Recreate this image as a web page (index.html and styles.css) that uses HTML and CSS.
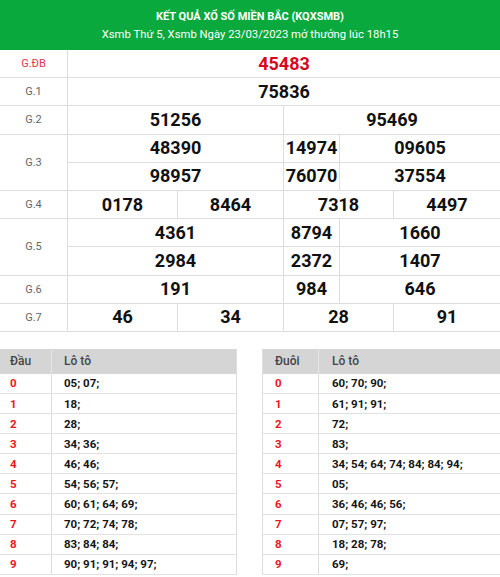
FILE: index.html
```html
<!DOCTYPE html>
<html lang="vi">
<head>
<meta charset="utf-8">
<link rel="stylesheet" href="styles.css">
</head>
<body>
<div class="header">
  <div class="title">KẾT QUẢ XỔ SỐ MIỀN BẮC (KQXSMB)</div>
  <div class="subtitle">Xsmb Thứ 5, Xsmb Ngày 23/03/2023 mở thưởng lúc 18h15</div>
</div>

<div class="results">
  <div class="prize">
    <div class="label special">G.ĐB</div>
    <div class="vals c1"><div class="num special">45483</div></div>
  </div>
  <div class="prize">
    <div class="label">G.1</div>
    <div class="vals c1"><div class="num">75836</div></div>
  </div>
  <div class="prize">
    <div class="label">G.2</div>
    <div class="vals c2"><div class="num">51256</div><div class="num">95469</div></div>
  </div>
  <div class="prize double">
    <div class="label">G.3</div>
    <div class="vals c3">
      <div class="num">48390</div><div class="num">14974</div><div class="num">09605</div>
      <div class="num">98957</div><div class="num">76070</div><div class="num">37554</div>
    </div>
  </div>
  <div class="prize">
    <div class="label">G.4</div>
    <div class="vals c4"><div class="num">0178</div><div class="num">8464</div><div class="num">7318</div><div class="num">4497</div></div>
  </div>
  <div class="prize double">
    <div class="label">G.5</div>
    <div class="vals c3">
      <div class="num">4361</div><div class="num">8794</div><div class="num">1660</div>
      <div class="num">2984</div><div class="num">2372</div><div class="num">1407</div>
    </div>
  </div>
  <div class="prize">
    <div class="label">G.6</div>
    <div class="vals c3"><div class="num">191</div><div class="num">984</div><div class="num">646</div></div>
  </div>
  <div class="prize">
    <div class="label">G.7</div>
    <div class="vals c4"><div class="num">46</div><div class="num">34</div><div class="num">28</div><div class="num">91</div></div>
  </div>
</div>

<div class="loto-wrap">
  <div class="loto left">
    <div class="lrow head"><div class="k">Đầu</div><div class="v">Lô tô</div></div>
    <div class="lrow"><div class="k">0</div><div class="v">05; 07;</div></div>
    <div class="lrow"><div class="k">1</div><div class="v">18;</div></div>
    <div class="lrow"><div class="k">2</div><div class="v">28;</div></div>
    <div class="lrow"><div class="k">3</div><div class="v">34; 36;</div></div>
    <div class="lrow"><div class="k">4</div><div class="v">46; 46;</div></div>
    <div class="lrow"><div class="k">5</div><div class="v">54; 56; 57;</div></div>
    <div class="lrow"><div class="k">6</div><div class="v">60; 61; 64; 69;</div></div>
    <div class="lrow"><div class="k">7</div><div class="v">70; 72; 74; 78;</div></div>
    <div class="lrow"><div class="k">8</div><div class="v">83; 84; 84;</div></div>
    <div class="lrow"><div class="k">9</div><div class="v">90; 91; 91; 94; 97;</div></div>
  </div>
  <div class="loto right">
    <div class="lrow head"><div class="k">Đuôi</div><div class="v">Lô tô</div></div>
    <div class="lrow"><div class="k">0</div><div class="v">60; 70; 90;</div></div>
    <div class="lrow"><div class="k">1</div><div class="v">61; 91; 91;</div></div>
    <div class="lrow"><div class="k">2</div><div class="v">72;</div></div>
    <div class="lrow"><div class="k">3</div><div class="v">83;</div></div>
    <div class="lrow"><div class="k">4</div><div class="v">34; 54; 64; 74; 84; 84; 94;</div></div>
    <div class="lrow"><div class="k">5</div><div class="v">05;</div></div>
    <div class="lrow"><div class="k">6</div><div class="v">36; 46; 46; 56;</div></div>
    <div class="lrow"><div class="k">7</div><div class="v">07; 57; 97;</div></div>
    <div class="lrow"><div class="k">8</div><div class="v">18; 28; 78;</div></div>
    <div class="lrow"><div class="k">9</div><div class="v">69;</div></div>
  </div>
</div>
</body>
</html>
```

FILE: styles.css
```css
* { box-sizing: border-box; }
html, body { margin: 0; padding: 0; background: #fff; }
body { font-family: Roboto, "Noto Sans", Arial, sans-serif; color: #111; width: 500px; overflow: hidden; }

.header {
  background: #0aa93d;
  height: 50px;
  color: #fff;
  text-align: center;
  display: flex;
  flex-direction: column;
  justify-content: center;
  gap: 5px;
  padding-top: 1px;
}
.title { font-size: 11px; font-weight: 700; line-height: 13px; }
.subtitle { font-size: 11.3px; line-height: 14px; }

.results { display: flex; flex-direction: column; }
.prize { display: flex; height: 28.2px; }
.prize.double { height: 56.4px; }
.label {
  width: 68px;
  flex: none;
  border-right: 1px solid #ddd;
  border-bottom: 1px solid #ddd;
  font-size: 11px;
  color: #666;
  display: flex;
  align-items: center;
  justify-content: center;
}
.label.special { color: #e8344a; }
.vals { flex: 1; display: grid; }
.vals.c1 { grid-template-columns: 1fr; }
.vals.c2 { grid-template-columns: 215px 1fr; }
.vals.c3 { grid-template-columns: 215px 56px 1fr; }
.vals.c4 { grid-template-columns: 109px 106px 110px 1fr; }
.num {
  border-bottom: 1px solid #ddd;
  border-left: 1px solid #ddd;
  font-size: 18px;
  font-weight: 700;
  color: #111;
  display: flex;
  align-items: center;
  justify-content: center;
  line-height: 1;
}
.vals .num:first-child,
.vals.c3 .num:nth-child(4) { border-left: none; }
.num.special { color: #d8081e; }

.loto-wrap {
  display: flex;
  justify-content: space-between;
  margin-top: 17px;
}
.loto { width: 237px; }
.loto.left { border-right: 1px solid #ddd; }
.loto.right { width: 238px; border-left: 1px solid #ddd; }
.lrow {
  display: flex;
  height: 20.1px;
  border-bottom: 1px solid #e2e2e2;
  font-size: 11.5px;
  font-weight: 700;
}
.lrow .k {
  width: 52px;
  flex: none;
  padding-left: 10px;
  color: #f0141e;
  border-right: 1px solid #ddd;
  display: flex;
  align-items: center;
}
.right .lrow .k { width: 56px; padding-left: 12px; }
.lrow .v {
  padding-left: 12px;
  color: #151515;
  display: flex;
  align-items: center;
}
.right .lrow .v { padding-left: 13px; }
.lrow.head {
  height: 25px;
  background: #d5d5d5;
  border-bottom: none;
  font-size: 12px;
  font-weight: 500;
}
.lrow.head .k { color: #444; border-right: 1px solid #e6e6e6; }
.lrow.head .v { color: #444; }
```
